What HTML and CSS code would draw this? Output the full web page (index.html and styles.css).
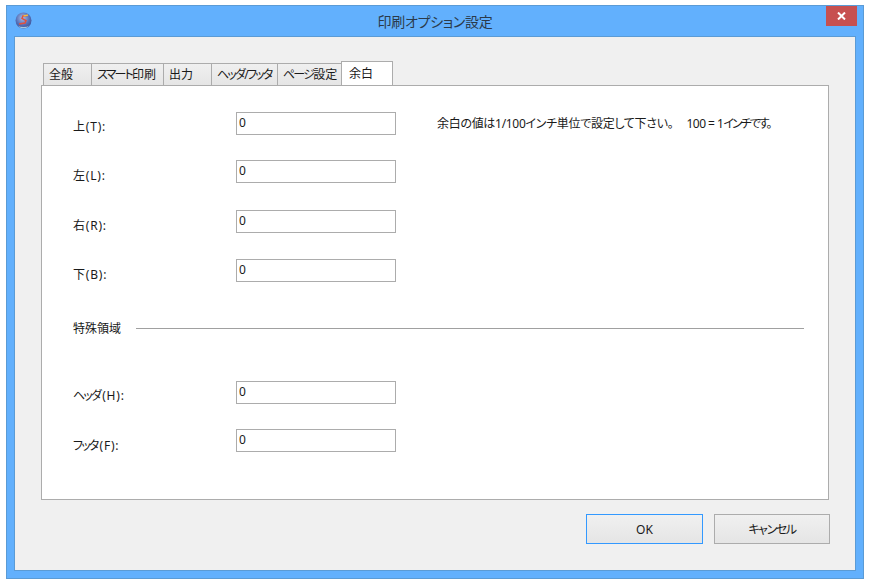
FILE: index.html
```html
<!DOCTYPE html>
<html lang="ja">
<head>
<meta charset="utf-8">
<title>印刷オプション設定</title>
<link rel="stylesheet" href="styles.css">
</head>
<body>
<div class="window">
  <header class="titlebar">
    <svg class="app-icon" width="17" height="17" viewBox="0 0 17 17">
      <defs>
        <radialGradient id="orb" cx="0.45" cy="0.35" r="0.7">
          <stop offset="0" stop-color="#a9bde6"/>
          <stop offset="0.6" stop-color="#5570b8"/>
          <stop offset="1" stop-color="#3c4f90"/>
        </radialGradient>
      </defs>
      <circle cx="8.5" cy="8.5" r="8" fill="url(#orb)"/>
      <path d="M2.5 13.5 A8 8 0 0 0 14.5 13.5 A9 6 0 0 1 2.5 13.5Z" fill="#a8c8dc"/>
      <path d="M12.5 3.5 L8 4 L7 6.5 L11 8.5 L10 11 L4 12" fill="none" stroke="#e2503c" stroke-width="1.5"/>
      <path d="M8.5 3.8 L13 3.2" stroke="#f2c23c" stroke-width="1.3"/>
    </svg>
    <h1 class="title">印刷オプション設定</h1>
    <button class="close" aria-label="閉じる">
      <svg width="9" height="8" viewBox="0 0 9 8"><path d="M1 0.5 L8 7.5 M8 0.5 L1 7.5" stroke="#fff" stroke-width="2"/></svg>
    </button>
  </header>
  <div class="client">
    <nav class="tabs">
      <span class="tab w48">全般</span>
      <span class="tab w72"><span class="kana-tight">スマート</span>印刷</span>
      <span class="tab w48">出力</span>
      <span class="tab w66"><span class="kana-tight">ヘッダ/フッタ</span></span>
      <span class="tab w64"><span class="kana-tight">ページ</span>設定</span>
      <span class="tab active">余白</span>
    </nav>
    <section class="panel">
      <div class="row r1"><label>上(T):</label><input class="field" value="0"><p class="hint">余白の値は1/100インチ単位で設定して下さい。<span class="gap">100 = 1</span><span class="kana-tail">インチです。</span></p></div>
      <div class="row r2"><label>左(L):</label><input class="field" value="0"></div>
      <div class="row r3"><label>右(R):</label><input class="field" value="0"></div>
      <div class="row r4"><label>下(B):</label><input class="field" value="0"></div>
      <div class="divider"><span>特殊領域</span><i></i></div>
      <div class="row r5"><label><span class="kana-label">ヘッダ</span>(H):</label><input class="field" value="0"></div>
      <div class="row r6"><label><span class="kana-label">フッタ</span>(F):</label><input class="field" value="0"></div>
    </section>
    <footer class="actions">
      <button class="btn btn-ok">OK</button>
      <button class="btn btn-cancel"><span class="kana">キャンセル</span></button>
    </footer>
  </div>
</div>
</body>
</html>
```
FILE: styles.css
```css
* { box-sizing: border-box; }
html, body { margin: 0; background: #fff; }
body {
  width: 870px;
  height: 584px;
  padding: 5px 6px;
  font-family: "Noto Sans", "Noto Sans CJK JP", sans-serif;
  font-size: 12px;
  color: #1a1a1a;
  font-feature-settings: "palt";
}
.kana { letter-spacing: -1.4px; }
.kana-tight { letter-spacing: -1.8px; }
.kana-label { letter-spacing: -1.8px; margin-right: 2px; }
.kana-tail { letter-spacing: -2px; }
.window {
  width: 858px;
  height: 574px;
  display: flex;
  flex-direction: column;
  background: #62b0fd;
  border: 1px solid #5b9bd5;
  padding: 0 7px 7px;
}
.titlebar {
  height: 30px;
  flex: none;
  display: flex;
  align-items: center;
  justify-content: center;
  position: relative;
}
.app-icon { position: absolute; left: 1px; top: 6px; }
.title {
  margin: 0;
  font-size: 14px;
  font-weight: 400;
  letter-spacing: -0.3px;
  color: #2b3a4a;
  font-family: "Noto Sans CJK JP", sans-serif;
}
.close {
  position: absolute;
  right: -1px;
  top: 0;
  width: 31px;
  height: 20px;
  border: 0;
  padding: 0;
  background: #c75050;
  display: flex;
  align-items: center;
  justify-content: center;
}
.client {
  flex: 1;
  background: #f0f0f0;
  border: 1px solid #5b9bd5;
  padding: 25px 26px 0;
  display: flex;
  flex-direction: column;
}
.tabs { display: flex; height: 23px; padding-left: 2px; flex: none; }
.tab {
  height: 22px;
  margin-top: 1px;
  padding-left: 5px;
  line-height: 22px;
  border: 1px solid #acacac;
  border-bottom: 0;
  background: linear-gradient(#f0f0f0, #e5e5e5);
  margin-right: -1px;
  white-space: nowrap;
}
.w48 { width: 49px; }
.w72 { width: 73px; }
.w66 { width: 67px; }
.w64 { width: 65px; }
.tab.active {
  width: 52px;
  height: 24px;
  margin-top: -1px;
  margin-bottom: -1px;
  padding-left: 7px;
  background: #fff;
  position: relative;
  z-index: 1;
  line-height: 23px;
}
.panel {
  height: 415px;
  flex: none;
  background: #fff;
  border: 1px solid #acacac;
  padding: 0 24px 0 31px;
}
.row { display: flex; align-items: flex-start; height: 23px; }
.row label { width: 163px; flex: none; padding-top: 6px; line-height: 18px; letter-spacing: 0.8px; }
.field {
  width: 160px;
  height: 23px;
  flex: none;
  border: 1px solid #acacac;
  padding: 0 2px 3px;
  font: inherit;
  color: #1a1a1a;
  background: #fff;
}
.hint { margin: 3px 0 0 41px; line-height: 18px; white-space: nowrap; letter-spacing: -0.3px; }
.gap { margin-left: 13px; letter-spacing: -0.5px; }
.r1 { margin-top: 26px; }
.r2 { margin-top: 25px; }
.r3 { margin-top: 27px; }
.r4 { margin-top: 26px; }
.r5 { margin-top: 43px; }
.r6 { margin-top: 25px; }
.r2 label, .r3 label, .r4 label { padding-top: 7px; }
.r6 label { padding-top: 8px; }
.divider {
  display: flex;
  align-items: center;
  margin-top: 36px;
  height: 20px;
  gap: 15px;
}
.divider i { flex: 1; height: 1px; background: #a0a0a0; }
.actions {
  display: flex;
  justify-content: flex-end;
  gap: 11px;
  margin-top: 14px;
  margin-right: -1px;
}
.btn {
  height: 30px;
  border: 1px solid #acacac;
  background: linear-gradient(#f0f0f0, #e5e5e5);
  font: inherit;
  font-feature-settings: "palt";
  color: #1a1a1a;
  padding: 0;
}
.btn-ok { width: 117px; border-color: #3399ff; }
.btn-cancel { width: 116px; }
```
